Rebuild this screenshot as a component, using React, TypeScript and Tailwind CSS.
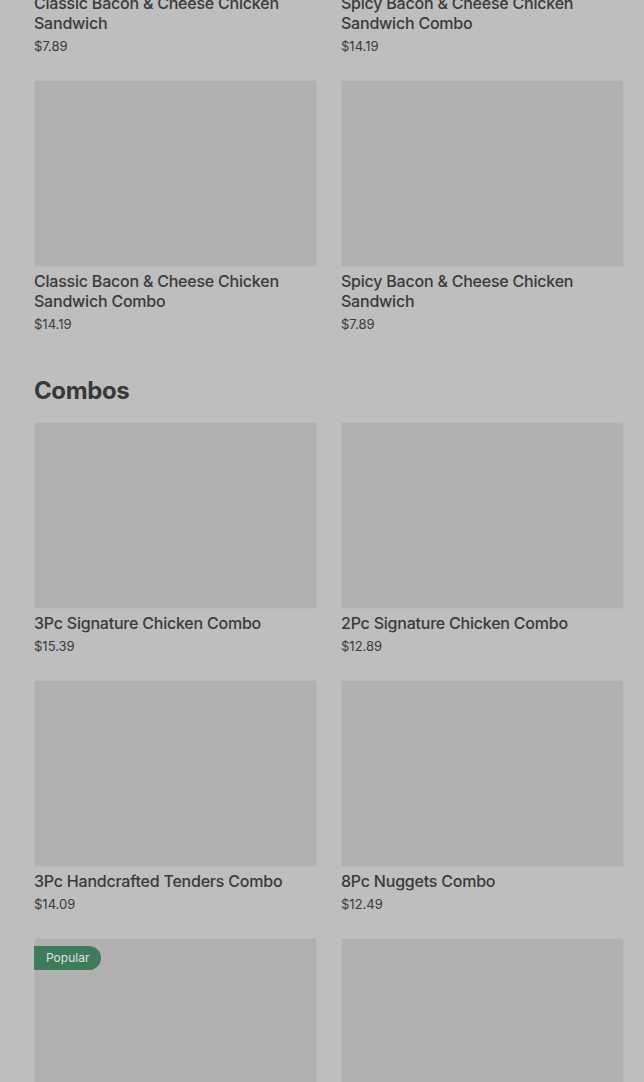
import React from "react";

type Item = { name: string; price: string; popular?: boolean };

const top: Item[] = [
  { name: "Classic Bacon & Cheese Chicken Sandwich", price: "$7.89" },
  { name: "Spicy Bacon & Cheese Chicken Sandwich Combo", price: "$14.19" },
  { name: "Classic Bacon & Cheese Chicken Sandwich Combo", price: "$14.19" },
  { name: "Spicy Bacon & Cheese Chicken Sandwich", price: "$7.89" },
];

const combos: Item[] = [
  { name: "3Pc Signature Chicken Combo", price: "$15.39" },
  { name: "2Pc Signature Chicken Combo", price: "$12.89" },
  { name: "3Pc Handcrafted Tenders Combo", price: "$14.09" },
  { name: "8Pc Nuggets Combo", price: "$12.49" },
  { name: "", price: "", popular: true },
  { name: "", price: "" },
];

function Card({ item }: { item: Item }) {
  return (
    <div className="flex flex-col">
      <div className="relative h-[187px] rounded-[2px] border border-[#b9b9b9] bg-[#b0b0b0]">
        {item.popular && (
          <div className="absolute left-[-1px] top-[7px] flex h-[24px] items-center rounded-r-full bg-[#3e7b5b] pl-[12px] pr-[12px] text-[12px] text-[#dde5e0]">
            Popular
          </div>
        )}
      </div>
      {item.name && (
        <>
          <div className="mt-[4px] text-[16px] font-medium leading-[20px] tracking-[-0.22px] text-[#3a3a3a]">{item.name}</div>
          <div className="mt-[3px] text-[13px] leading-[20px] text-[#3a3a3a]">{item.price}</div>
        </>
      )}
    </div>
  );
}

export default function App() {
  return (
    <div
      className="h-[1082px] overflow-hidden bg-[#bebebe]"
      style={{ fontFamily: "Inter, 'Noto Sans', sans-serif" }}
    >
      <div className="mt-[-198px] pl-[34px] pr-[20px]">
        <div className="grid grid-cols-2 gap-x-[24px] gap-y-[24px]">
          {top.map((it, i) => (
            <Card key={i} item={it} />
          ))}
        </div>
        <h2 className="mt-[41px] mb-[15px] text-[24px] font-bold leading-[32px] tracking-[-0.4px] text-[#383838]">
          Combos
        </h2>
        <div className="grid grid-cols-2 gap-x-[24px] gap-y-[24px]">
          {combos.map((it, i) => (
            <Card key={i} item={it} />
          ))}
        </div>
      </div>
    </div>
  );
}
